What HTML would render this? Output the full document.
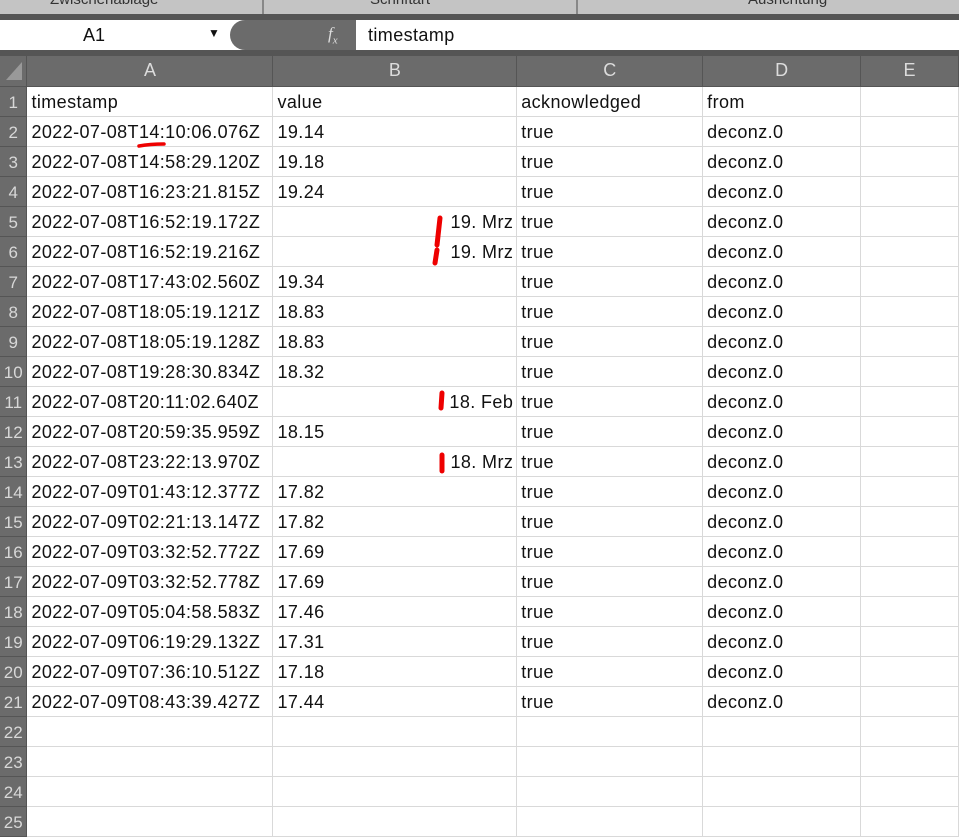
<!DOCTYPE html><html><head><style>
body{margin:0;width:959px;height:825px;overflow:hidden;background:#fff;font-family:"Liberation Sans",sans-serif;position:relative}
.a{position:absolute}
table{position:absolute;left:0;top:56px;border-collapse:collapse;table-layout:fixed}
td{height:30px;padding:2px 0 0 4px;box-sizing:border-box;border-right:1px solid #d9d9d9;border-bottom:1px solid #d9d9d9;font-size:18px;letter-spacing:0.4px;color:#111;white-space:nowrap;overflow:hidden;line-height:27px}
td.h{background:#6b6b6b;color:#d8d8d8;border-color:#555;padding:2px 0 0 0;text-align:center;font-size:17px;letter-spacing:0}
tr.hd td{background:#6b6b6b;color:#dcdcdc;text-align:center;padding:0;border-color:#555;letter-spacing:0}
td.r{text-align:right;padding-right:3px}
</style></head><body>
<div class="a" style="left:0;top:0;width:959px;height:14px;background:#c4c4c4;overflow:hidden">
<span class="a" style="left:50px;top:-9px;font-size:15px;color:#333">Zwischenablage</span>
<span class="a" style="left:370px;top:-9px;font-size:15px;color:#333">Schriftart</span>
<span class="a" style="left:748px;top:-9px;font-size:15px;color:#333">Ausrichtung</span>
<div class="a" style="left:262px;top:0;width:2px;height:14px;background:#888"></div>
<div class="a" style="left:576px;top:0;width:2px;height:14px;background:#888"></div>
</div>
<div class="a" style="left:0;top:14px;width:959px;height:6px;background:#555"></div>
<div class="a" style="left:0;top:20px;width:959px;height:30px;background:#fff"></div>
<span class="a" style="left:83px;top:25px;font-size:18px;color:#111">A1</span>
<span class="a" style="left:208px;top:26px;font-size:12px;color:#111">▼</span>
<div class="a" style="left:230px;top:20px;width:126px;height:30px;background:#6b6b6b;border-radius:15px 0 0 15px"></div>
<span class="a" style="left:328px;top:24px;font-size:17px;color:#ddd;font-style:italic;font-family:'Liberation Serif',serif">f<sub style="font-size:11px">x</sub></span>
<span class="a" style="left:368px;top:25px;font-size:18px;color:#111;letter-spacing:0.4px">timestamp</span>
<div class="a" style="left:0;top:50px;width:959px;height:7px;background:#555"></div>
<table>
<colgroup><col style="width:27px"><col style="width:246px"><col style="width:244px"><col style="width:186px"><col style="width:158px"><col style="width:98px"></colgroup>
<tr class="hd"><td style="position:relative"><svg width="27" height="29" style="position:absolute;left:0;top:0"><polygon points="22,6 22,24 6,24" fill="#999"/></svg></td><td>A</td><td>B</td><td>C</td><td>D</td><td>E</td></tr>
<tr><td class="h">1</td><td>timestamp</td><td>value</td><td>acknowledged</td><td>from</td><td></td></tr>
<tr><td class="h">2</td><td>2022-07-08T14:10:06.076Z</td><td>19.14</td><td>true</td><td>deconz.0</td><td></td></tr>
<tr><td class="h">3</td><td>2022-07-08T14:58:29.120Z</td><td>19.18</td><td>true</td><td>deconz.0</td><td></td></tr>
<tr><td class="h">4</td><td>2022-07-08T16:23:21.815Z</td><td>19.24</td><td>true</td><td>deconz.0</td><td></td></tr>
<tr><td class="h">5</td><td>2022-07-08T16:52:19.172Z</td><td class="r">19. Mrz</td><td>true</td><td>deconz.0</td><td></td></tr>
<tr><td class="h">6</td><td>2022-07-08T16:52:19.216Z</td><td class="r">19. Mrz</td><td>true</td><td>deconz.0</td><td></td></tr>
<tr><td class="h">7</td><td>2022-07-08T17:43:02.560Z</td><td>19.34</td><td>true</td><td>deconz.0</td><td></td></tr>
<tr><td class="h">8</td><td>2022-07-08T18:05:19.121Z</td><td>18.83</td><td>true</td><td>deconz.0</td><td></td></tr>
<tr><td class="h">9</td><td>2022-07-08T18:05:19.128Z</td><td>18.83</td><td>true</td><td>deconz.0</td><td></td></tr>
<tr><td class="h">10</td><td>2022-07-08T19:28:30.834Z</td><td>18.32</td><td>true</td><td>deconz.0</td><td></td></tr>
<tr><td class="h">11</td><td>2022-07-08T20:11:02.640Z</td><td class="r">18. Feb</td><td>true</td><td>deconz.0</td><td></td></tr>
<tr><td class="h">12</td><td>2022-07-08T20:59:35.959Z</td><td>18.15</td><td>true</td><td>deconz.0</td><td></td></tr>
<tr><td class="h">13</td><td>2022-07-08T23:22:13.970Z</td><td class="r">18. Mrz</td><td>true</td><td>deconz.0</td><td></td></tr>
<tr><td class="h">14</td><td>2022-07-09T01:43:12.377Z</td><td>17.82</td><td>true</td><td>deconz.0</td><td></td></tr>
<tr><td class="h">15</td><td>2022-07-09T02:21:13.147Z</td><td>17.82</td><td>true</td><td>deconz.0</td><td></td></tr>
<tr><td class="h">16</td><td>2022-07-09T03:32:52.772Z</td><td>17.69</td><td>true</td><td>deconz.0</td><td></td></tr>
<tr><td class="h">17</td><td>2022-07-09T03:32:52.778Z</td><td>17.69</td><td>true</td><td>deconz.0</td><td></td></tr>
<tr><td class="h">18</td><td>2022-07-09T05:04:58.583Z</td><td>17.46</td><td>true</td><td>deconz.0</td><td></td></tr>
<tr><td class="h">19</td><td>2022-07-09T06:19:29.132Z</td><td>17.31</td><td>true</td><td>deconz.0</td><td></td></tr>
<tr><td class="h">20</td><td>2022-07-09T07:36:10.512Z</td><td>17.18</td><td>true</td><td>deconz.0</td><td></td></tr>
<tr><td class="h">21</td><td>2022-07-09T08:43:39.427Z</td><td>17.44</td><td>true</td><td>deconz.0</td><td></td></tr>
<tr><td class="h">22</td><td></td><td></td><td></td><td></td><td></td></tr>
<tr><td class="h">23</td><td></td><td></td><td></td><td></td><td></td></tr>
<tr><td class="h">24</td><td></td><td></td><td></td><td></td><td></td></tr>
<tr><td class="h">25</td><td></td><td></td><td></td><td></td><td></td></tr>
</table>
<svg class="a" style="left:0;top:0" width="959" height="825">
<g stroke="#e00" stroke-linecap="round" fill="none">
<path d="M139 146 Q150 144 164 144" stroke-width="3.5"/>
<path d="M440 218 L437 245" stroke-width="5"/>
<path d="M437 250 L435 263" stroke-width="5"/>
<path d="M442 393 L441 408" stroke-width="5"/>
<path d="M442 455 L442 471" stroke-width="5"/>
</g></svg>
</body></html>
